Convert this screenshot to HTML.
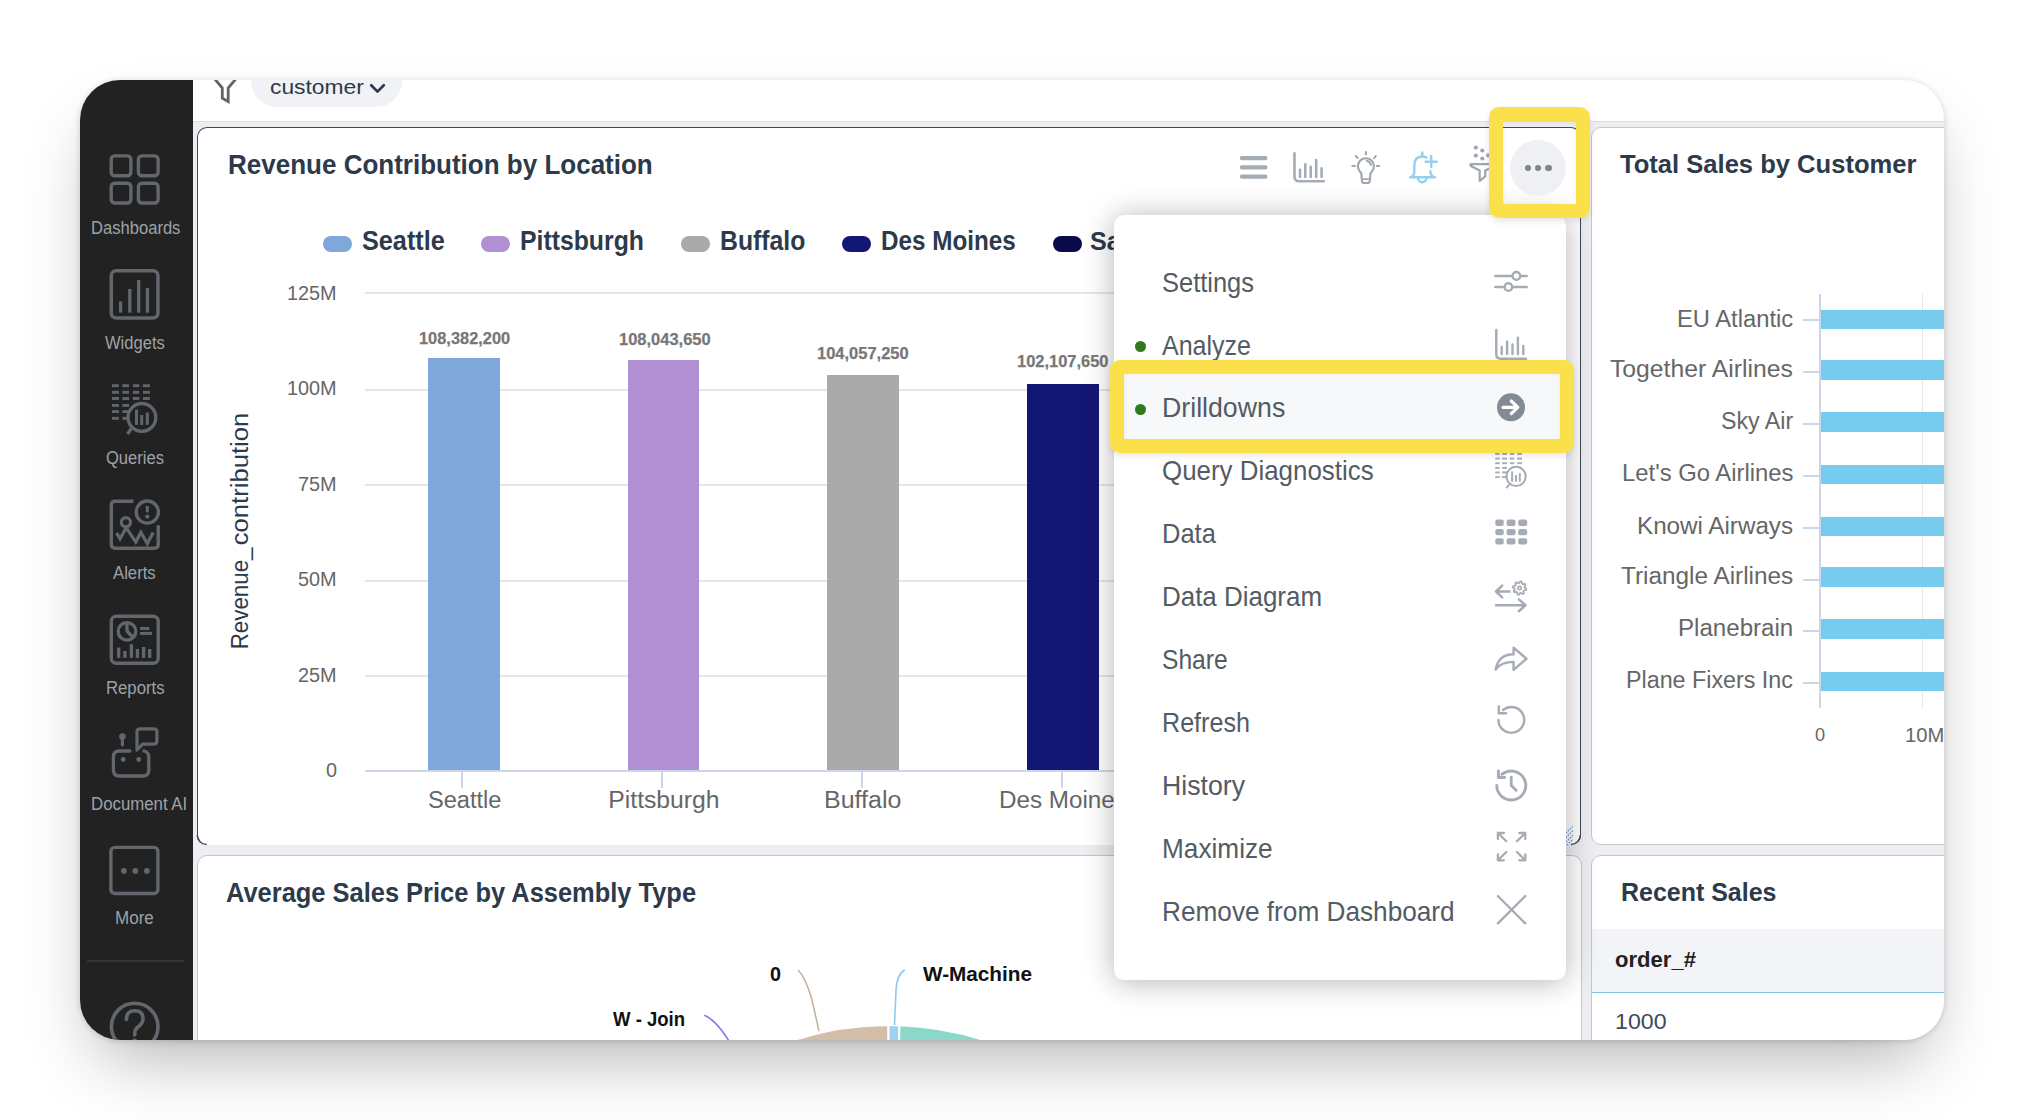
<!DOCTYPE html><html><head><meta charset="utf-8"><style>
*{margin:0;padding:0;box-sizing:border-box}
html,body{width:2024px;height:1120px;background:#fff;overflow:hidden;font-family:"Liberation Sans",sans-serif}
.t{position:absolute;white-space:nowrap;transform-origin:0 0}
.a{position:absolute}
svg{position:absolute;overflow:visible}
</style></head><body>

<div class="a" style="left:80px;top:80px;width:1864px;height:960px;border-radius:40px;box-shadow:0 1px 6px rgba(0,0,0,0.16),0 34px 70px -18px rgba(0,0,0,0.31)"></div>
<div class="a" style="left:80px;top:80px;width:1864px;height:960px;border-radius:40px;overflow:hidden;background:#eceef1">
<div class="a" style="left:-80px;top:-80px;width:2024px;height:1120px">
<div class="a" style="left:80px;top:80px;width:113px;height:960px;background:#222222"></div>
<div class="a" style="left:193px;top:80px;width:1751px;height:42px;background:#fff;border-bottom:1px solid #dcdfe3"></div>
<svg width="2024" height="1120" style="left:0;top:0"><rect x="111.2" y="155.89999999999998" width="19.700000000000003" height="19.8" rx="3.5" fill="none" stroke="#61676d" stroke-width="3.4"/><rect x="138.39999999999998" y="155.89999999999998" width="19.700000000000003" height="19.8" rx="3.5" fill="none" stroke="#61676d" stroke-width="3.4"/><rect x="111.2" y="183.2" width="19.700000000000003" height="19.8" rx="3.5" fill="none" stroke="#61676d" stroke-width="3.4"/><rect x="138.39999999999998" y="183.2" width="19.700000000000003" height="19.8" rx="3.5" fill="none" stroke="#61676d" stroke-width="3.4"/><rect x="111.25" y="270.65" width="46.7" height="47.4" rx="5" fill="none" stroke="#61676d" stroke-width="3.5"/><rect x="118.94999999999999" y="301.5" width="3.3" height="11.199999999999989" fill="#61676d"/><rect x="128.15" y="289" width="3.3" height="23.69999999999999" fill="#61676d"/><rect x="137.04999999999998" y="280" width="3.3" height="32.69999999999999" fill="#61676d"/><rect x="145.75" y="287.9" width="3.3" height="24.80000000000001" fill="#61676d"/><rect x="112.0" y="384.25" width="6.900000000000006" height="2.9" fill="#61676d"/><rect x="122.4" y="384.25" width="6.599999999999994" height="2.9" fill="#61676d"/><rect x="132.9" y="384.25" width="6.400000000000006" height="2.9" fill="#61676d"/><rect x="143.0" y="384.25" width="6.900000000000006" height="2.9" fill="#61676d"/><rect x="112.0" y="390.85" width="6.900000000000006" height="2.9" fill="#61676d"/><rect x="122.4" y="390.85" width="6.599999999999994" height="2.9" fill="#61676d"/><rect x="132.9" y="390.85" width="6.400000000000006" height="2.9" fill="#61676d"/><rect x="143.0" y="390.85" width="6.900000000000006" height="2.9" fill="#61676d"/><rect x="112.0" y="397.05" width="6.900000000000006" height="2.9" fill="#61676d"/><rect x="122.4" y="397.05" width="6.599999999999994" height="2.9" fill="#61676d"/><rect x="132.9" y="397.05" width="6.400000000000006" height="2.9" fill="#61676d"/><rect x="143.0" y="397.05" width="6.900000000000006" height="2.9" fill="#61676d"/><rect x="112.0" y="403.95" width="6.900000000000006" height="2.9" fill="#61676d"/><rect x="122.4" y="403.95" width="6.599999999999994" height="2.9" fill="#61676d"/><rect x="112.0" y="410.15000000000003" width="6.900000000000006" height="2.9" fill="#61676d"/><rect x="122.4" y="410.15000000000003" width="6.599999999999994" height="2.9" fill="#61676d"/><rect x="112.0" y="416.85" width="6.900000000000006" height="2.9" fill="#61676d"/><rect x="122.4" y="416.85" width="6.599999999999994" height="2.9" fill="#61676d"/><circle cx="141.9" cy="417.4" r="13.9" fill="#222" stroke="#61676d" stroke-width="3.3"/><rect x="135.0" y="409.6" width="3" height="15.299999999999955" fill="#61676d"/><rect x="140.2" y="415" width="3" height="9.899999999999977" fill="#61676d"/><rect x="145.8" y="412.5" width="3" height="12.399999999999977" fill="#61676d"/><line x1="131.5" y1="427.8" x2="127.6" y2="434.2" stroke="#61676d" stroke-width="3.3"/><path d="M133.4 501.3 H115.3 Q111.3 501.3 111.3 505.3 V544.2 Q111.3 548.2 115.3 548.2 H154.2 Q158.2 548.2 158.2 544.2 V525.3" fill="none" stroke="#61676d" stroke-width="3.4"/><circle cx="147.3" cy="512.1" r="11.1" fill="none" stroke="#61676d" stroke-width="3.3"/><line x1="147.3" y1="506" x2="147.3" y2="512.3" stroke="#61676d" stroke-width="3"/><circle cx="147.3" cy="516.6" r="2.1" fill="#61676d"/><circle cx="125.9" cy="522.3" r="4.6" fill="none" stroke="#61676d" stroke-width="3.2"/><polyline points="116.5,533 120,538.7 126.2,527.7 135.8,542.1 140.9,532.5 147.3,543.5 153.2,532.5" fill="none" stroke="#61676d" stroke-width="3.3" stroke-linejoin="miter"/><rect x="111.3" y="616.3" width="46.9" height="46.9" rx="5" fill="none" stroke="#61676d" stroke-width="3.4"/><circle cx="127" cy="631.4" r="8.8" fill="none" stroke="#61676d" stroke-width="3.3"/><polyline points="127,622.5 127,631 132.6,637" fill="none" stroke="#61676d" stroke-width="3.3"/><rect x="140.1" y="627" width="9.1" height="3" fill="#61676d"/><rect x="140.1" y="631.9" width="11.8" height="3" fill="#61676d"/><rect x="117.05" y="647.5" width="3.3" height="10.399999999999977" fill="#61676d"/><rect x="123.25" y="651" width="3.3" height="6.899999999999977" fill="#61676d"/><rect x="129.75" y="644.1" width="3.3" height="13.799999999999955" fill="#61676d"/><rect x="135.75" y="649" width="3.3" height="8.899999999999977" fill="#61676d"/><rect x="141.95" y="647" width="3.3" height="10.899999999999977" fill="#61676d"/><rect x="148.04999999999998" y="649" width="3.3" height="8.899999999999977" fill="#61676d"/><circle cx="122.4" cy="736.5" r="3.3" fill="#61676d"/><line x1="122.4" y1="737" x2="122.4" y2="745" stroke="#61676d" stroke-width="3.2" stroke-linecap="round"/><path d="M129.9 751 H119.4 Q113.4 751 113.4 757 V770 Q113.4 776 119.4 776 H142.8 Q148.8 776 148.8 770 V757.5 Q148.8 752 144 751" fill="none" stroke="#61676d" stroke-width="3.3" stroke-linecap="round"/><circle cx="123.2" cy="759.5" r="2.4" fill="#61676d"/><circle cx="138.7" cy="759.5" r="2.4" fill="#61676d"/><path d="M137 750 V731.8 Q137 728.8 140 728.8 H153.9 Q156.9 728.8 156.9 731.8 V741.1 Q156.9 744.1 153.9 744.1 H142.6 Z" fill="none" stroke="#61676d" stroke-width="3.2" stroke-linejoin="round"/><rect x="110.9" y="847.4" width="47" height="46.1" rx="4" fill="none" stroke="#61676d" stroke-width="3.4"/><circle cx="123.9" cy="870.9" r="2.9" fill="#61676d"/><circle cx="135.3" cy="870.9" r="2.9" fill="#61676d"/><circle cx="146.9" cy="870.9" r="2.9" fill="#61676d"/><rect x="87" y="960.2" width="97" height="1.4" fill="#3a3d40"/><circle cx="134.7" cy="1026.6" r="23.3" fill="none" stroke="#61676d" stroke-width="3.6"/><path d="M126.4 1019.5 Q126.4 1010.8 134.7 1010.8 Q143 1010.8 143 1018.6 Q143 1023.5 138.5 1026.5 Q134.7 1029.3 134.7 1033.5 V1035" fill="none" stroke="#61676d" stroke-width="3.6" stroke-linecap="round"/><circle cx="134.7" cy="1041" r="2.4" fill="#61676d"/></svg>
<div class="t" style="left:90.60px;top:217.60px;font-size:17.89px;line-height:19.99px;color:#9ea2a7;transform:scaleX(0.9277);">Dashboards</div>
<div class="t" style="left:104.60px;top:332.60px;font-size:17.89px;line-height:19.99px;color:#9ea2a7;transform:scaleX(0.9253);">Widgets</div>
<div class="t" style="left:105.50px;top:447.80px;font-size:17.89px;line-height:19.99px;color:#9ea2a7;transform:scaleX(0.9256);">Queries</div>
<div class="t" style="left:113.00px;top:562.50px;font-size:17.89px;line-height:19.99px;color:#9ea2a7;transform:scaleX(0.9341);">Alerts</div>
<div class="t" style="left:105.50px;top:677.80px;font-size:17.89px;line-height:19.99px;color:#9ea2a7;transform:scaleX(0.9352);">Reports</div>
<div class="t" style="left:90.80px;top:793.70px;font-size:17.89px;line-height:19.99px;color:#9ea2a7;transform:scaleX(0.9402);">Document AI</div>
<div class="t" style="left:115.10px;top:908.40px;font-size:17.89px;line-height:19.99px;color:#9ea2a7;transform:scaleX(0.9522);">More</div>
<svg width="2024" height="1120" style="left:0;top:0"><polyline points="213.2,77 222.3,88 222.3,98.2 228.2,101.5 228.2,88 237.5,77" fill="none" stroke="#5f656b" stroke-width="2.8" stroke-linejoin="miter"/></svg>
<div class="a" style="left:251px;top:55px;width:151px;height:52px;border-radius:26px;background:#f0f2f5"></div>
<div class="t" style="left:269.80px;top:77.16px;font-size:19.60px;line-height:21.90px;color:#2c3a4b;transform:scaleX(1.1649);">customer</div>
<svg width="2024" height="1120" style="left:0;top:0"><polyline points="371.2,85.2 377.5,91.6 383.8,85.2" fill="none" stroke="#2c3a4b" stroke-width="2.7" stroke-linecap="round" stroke-linejoin="round"/></svg>
<div class="a" style="left:196.5px;top:126.8px;width:1384.5px;height:718.2px;border-radius:10px;background:#fff;border:1.3px solid #3d4858;border-bottom-color:transparent"></div>
<svg width="2024" height="1120" style="left:0;top:0"><path d="M197.15 835 A9.5 9.5 0 0 0 206.65 844.5" fill="none" stroke="#3d4858" stroke-width="1.3"/><path d="M1580.35 835 A9.5 9.5 0 0 1 1570.85 844.5" fill="none" stroke="#3d4858" stroke-width="1.3"/></svg>
<svg width="2024" height="1120" style="left:0;top:0"><path d="M1566 833 L1572.5 826.5 M1566 837.5 L1573 830.5 M1566 842 L1573 835 M1567 845 L1573 839" stroke="#6d9ad6" stroke-width="1.3" stroke-dasharray="1.5 1.2"/></svg>
<div class="a" style="left:1591px;top:127px;width:400px;height:718px;border-radius:10px;background:#fff;border:1px solid #c3c7cd"></div>
<div class="a" style="left:196.5px;top:855px;width:1385px;height:300px;border-radius:10px;background:#fff;border:1px solid #c3c7cd"></div>
<div class="a" style="left:1591px;top:855px;width:400px;height:300px;border-radius:10px;background:#fff;border:1px solid #c3c7cd"></div>
<div class="t" style="left:228.00px;top:149.78px;font-size:27.20px;line-height:30.39px;font-weight:700;color:#2c3a4b;transform:scaleX(0.9565);">Revenue Contribution by Location</div>
<svg width="2024" height="1120" style="left:0;top:0"><rect x="1239.9" y="156.0" width="27.5" height="4.2" rx="1.8" fill="#a6acb5"/><rect x="1239.9" y="165.3" width="27.5" height="4.2" rx="1.8" fill="#a6acb5"/><rect x="1239.9" y="174.5" width="27.5" height="4.2" rx="1.8" fill="#a6acb5"/><path d="M1294.5 153.2 V176.5 Q1294.5 181.3 1299.3 181.3 H1323.8" fill="none" stroke="#a6acb5" stroke-width="2.6" stroke-linecap="round"/><line x1="1300" y1="169.7" x2="1300" y2="177" stroke="#a6acb5" stroke-width="2.6" stroke-linecap="round"/><line x1="1305.3" y1="164.2" x2="1305.3" y2="177" stroke="#a6acb5" stroke-width="2.6" stroke-linecap="round"/><line x1="1310.7" y1="166.9" x2="1310.7" y2="177" stroke="#a6acb5" stroke-width="2.6" stroke-linecap="round"/><line x1="1316.2" y1="160" x2="1316.2" y2="177" stroke="#a6acb5" stroke-width="2.6" stroke-linecap="round"/><line x1="1321.6" y1="168.4" x2="1321.6" y2="177" stroke="#a6acb5" stroke-width="2.6" stroke-linecap="round"/><path d="M1361.3 173.2 L1359.6 171.2 A8 8 0 1 1 1372.2 171.2 L1370.5 173.2 L1369.8 180.8 Q1369.5 183 1367.5 183 H1364.2 Q1362.2 183 1361.9 180.8 Z" fill="none" stroke="#a0a6b0" stroke-width="2.1" stroke-linejoin="round"/><line x1="1363" y1="179.2" x2="1368.8" y2="179.2" stroke="#a0a6b0" stroke-width="1.8"/><path d="M1366.7 160.8 A6 6 0 0 1 1370.9 165" fill="none" stroke="#a0a6b0" stroke-width="2" stroke-linecap="round"/><line x1="1365.9" y1="152" x2="1365.9" y2="154.4" stroke="#a0a6b0" stroke-width="2" stroke-linecap="round"/><line x1="1352.4" y1="166" x2="1355" y2="166" stroke="#a0a6b0" stroke-width="2" stroke-linecap="round"/><line x1="1376.6" y1="166" x2="1379.2" y2="166" stroke="#a0a6b0" stroke-width="2" stroke-linecap="round"/><line x1="1355.8" y1="156" x2="1357.6" y2="158" stroke="#a0a6b0" stroke-width="2" stroke-linecap="round"/><line x1="1375.8" y1="156.1" x2="1374" y2="158.1" stroke="#a0a6b0" stroke-width="2" stroke-linecap="round"/><line x1="1422.3" y1="152.4" x2="1422.3" y2="155.8" stroke="#93cfee" stroke-width="2.4" stroke-linecap="round"/><path d="M1426.3 157.6 Q1424.5 156.5 1422.3 156.5 Q1414.3 156.5 1414.3 165.5 V171.5 Q1414.3 175.5 1411.5 176.8" fill="none" stroke="#93cfee" stroke-width="2.4" stroke-linecap="round"/><path d="M1430.3 171 Q1430.5 175.5 1433.5 176.8" fill="none" stroke="#93cfee" stroke-width="2.4" stroke-linecap="round"/><line x1="1410.2" y1="177.3" x2="1434.8" y2="177.3" stroke="#93cfee" stroke-width="2.4" stroke-linecap="round"/><path d="M1418 178 A4.2 4.2 0 0 0 1426.4 178" fill="none" stroke="#93cfee" stroke-width="2.4"/><line x1="1431.2" y1="156" x2="1431.2" y2="167" stroke="#93cfee" stroke-width="2.4" stroke-linecap="round"/><line x1="1425.6" y1="161.8" x2="1436.8" y2="161.8" stroke="#93cfee" stroke-width="2.4" stroke-linecap="round"/><circle cx="1475.8" cy="147.6" r="2.1" fill="#a0a6b0"/><circle cx="1482.3" cy="150.5" r="2.1" fill="#a0a6b0"/><circle cx="1475.8" cy="155.6" r="2.1" fill="#a0a6b0"/><circle cx="1482.3" cy="158.5" r="2.1" fill="#a0a6b0"/><circle cx="1488.1" cy="155.4" r="2.1" fill="#a0a6b0"/><path d="M1492 164.1 H1471.5 Q1469.5 164.1 1470.8 166 L1479.7 170.6 V181 L1485.2 176.4 V170.6 L1492 167.5" fill="none" stroke="#a0a6b0" stroke-width="2.2" stroke-linejoin="round"/></svg>
<div class="a" style="left:323px;top:235.7px;width:29px;height:16.4px;border-radius:8.2px;background:#7fa7d9"></div>
<div class="t" style="left:361.60px;top:226.97px;font-size:26.76px;line-height:29.90px;font-weight:700;color:#2c3a4b;transform:scaleX(0.9432);">Seattle</div>
<div class="a" style="left:481.2px;top:235.7px;width:28.69999999999999px;height:16.4px;border-radius:8.2px;background:#b08fd3"></div>
<div class="t" style="left:520.00px;top:226.97px;font-size:26.76px;line-height:29.90px;font-weight:700;color:#2c3a4b;transform:scaleX(0.9266);">Pittsburgh</div>
<div class="a" style="left:681.2px;top:235.7px;width:29.0px;height:16.4px;border-radius:8.2px;background:#aaaaaa"></div>
<div class="t" style="left:719.90px;top:226.97px;font-size:26.76px;line-height:29.90px;font-weight:700;color:#2c3a4b;transform:scaleX(0.9262);">Buffalo</div>
<div class="a" style="left:842.1px;top:235.7px;width:28.899999999999977px;height:16.4px;border-radius:8.2px;background:#131774"></div>
<div class="t" style="left:880.90px;top:226.97px;font-size:26.76px;line-height:29.90px;font-weight:700;color:#2c3a4b;transform:scaleX(0.9063);">Des Moines</div>
<div class="a" style="left:1052.7px;top:235.7px;width:29.0px;height:16.4px;border-radius:8.2px;background:#0b0a4a"></div>
<div class="t" style="left:1090.30px;top:227.06px;font-size:26.67px;line-height:29.80px;font-weight:700;color:#2c3a4b;transform:scaleX(0.9400);">San Diego</div>
<div class="a" style="left:364.5px;top:292px;width:1200px;height:2px;background:#e6e6e6"></div>
<div class="a" style="left:364.5px;top:389px;width:1200px;height:2px;background:#e6e6e6"></div>
<div class="a" style="left:364.5px;top:484px;width:1200px;height:2px;background:#e6e6e6"></div>
<div class="a" style="left:364.5px;top:580px;width:1200px;height:2px;background:#e6e6e6"></div>
<div class="a" style="left:364.5px;top:675px;width:1200px;height:2px;background:#e6e6e6"></div>
<div class="a" style="left:364.5px;top:770.4px;width:1200px;height:2px;background:#ccd6eb"></div>
<div class="t" style="left:287.00px;top:281.40px;font-size:20.65px;line-height:23.07px;color:#666666;transform:scaleX(0.9615);">125M</div>
<div class="t" style="left:287.00px;top:376.10px;font-size:20.65px;line-height:23.07px;color:#666666;transform:scaleX(0.9615);">100M</div>
<div class="t" style="left:298.07px;top:471.90px;font-size:20.65px;line-height:23.07px;color:#666666;transform:scaleX(0.9615);">75M</div>
<div class="t" style="left:298.07px;top:567.10px;font-size:20.65px;line-height:23.07px;color:#666666;transform:scaleX(0.9615);">50M</div>
<div class="t" style="left:298.07px;top:662.90px;font-size:20.65px;line-height:23.07px;color:#666666;transform:scaleX(0.9615);">25M</div>
<div class="t" style="left:325.68px;top:757.90px;font-size:20.65px;line-height:23.07px;color:#666666;transform:scaleX(0.9615);">0</div>
<div class="a" style="left:427.6px;top:358.2px;width:72.1px;height:412.2px;background:#7fa7d9"></div>
<div class="a" style="left:627.5px;top:360.1px;width:71.7px;height:410.3px;background:#b08fd3"></div>
<div class="a" style="left:827.1px;top:374.5px;width:71.9px;height:395.9px;background:#aaaaaa"></div>
<div class="a" style="left:1027.0px;top:383.5px;width:72.0px;height:386.9px;background:#131774"></div>
<div class="t" style="left:419.30px;top:328.79px;font-size:17.02px;line-height:19.01px;font-weight:700;color:#777777;transform:scaleX(0.9634);-webkit-text-stroke:0.25px #777777;">108,382,200</div>
<div class="t" style="left:619.30px;top:330.29px;font-size:17.02px;line-height:19.01px;font-weight:700;color:#777777;transform:scaleX(0.9687);-webkit-text-stroke:0.25px #777777;">108,043,650</div>
<div class="t" style="left:817.10px;top:344.39px;font-size:17.02px;line-height:19.01px;font-weight:700;color:#777777;transform:scaleX(0.9687);-webkit-text-stroke:0.25px #777777;">104,057,250</div>
<div class="t" style="left:1016.70px;top:351.59px;font-size:17.02px;line-height:19.01px;font-weight:700;color:#777777;transform:scaleX(0.9666);-webkit-text-stroke:0.25px #777777;">102,107,650</div>
<div class="a" style="left:461px;top:772px;width:2px;height:16px;background:#ccd6eb"></div>
<div class="a" style="left:661px;top:772px;width:2px;height:16px;background:#ccd6eb"></div>
<div class="a" style="left:861px;top:772px;width:2px;height:16px;background:#ccd6eb"></div>
<div class="a" style="left:1061px;top:772px;width:2px;height:16px;background:#ccd6eb"></div>
<div class="t" style="left:427.60px;top:785.92px;font-size:24.73px;line-height:27.62px;color:#666666;transform:scaleX(0.9537);">Seattle</div>
<div class="t" style="left:608.30px;top:785.92px;font-size:24.73px;line-height:27.62px;color:#666666;">Pittsburgh</div>
<div class="t" style="left:824.10px;top:785.92px;font-size:24.73px;line-height:27.62px;color:#666666;transform:scaleX(1.0114);">Buffalo</div>
<div class="t" style="left:999.20px;top:785.92px;font-size:24.73px;line-height:27.62px;color:#666666;transform:scaleX(0.9800);">Des Moines</div>
<div class="t" style="left:248.00px;top:626.75px;font-size:24.58px;line-height:27.46px;color:#2c3a4b;transform-origin:0 22.25px;transform:rotate(-90deg) scaleX(0.9080)">Revenue_</div>
<div class="t" style="left:248.00px;top:523.15px;font-size:24.58px;line-height:27.46px;color:#2c3a4b;transform-origin:0 22.25px;transform:rotate(-90deg) scaleX(1.0434)">contribution</div>
<div class="t" style="left:1620.40px;top:149.70px;font-size:26.62px;line-height:29.74px;font-weight:700;color:#2c3a4b;transform:scaleX(0.9607);">Total Sales by Customer</div>
<div class="a" style="left:1819px;top:293.5px;width:2px;height:414px;background:#ccd6eb"></div>
<div class="a" style="left:1921.5px;top:293.5px;width:1.5px;height:414px;background:#e6e6e6"></div>
<div class="a" style="left:1821px;top:309.8px;width:200px;height:19.6px;background:#76cbef"></div>
<div class="a" style="left:1802.7px;top:318.6px;width:16.5px;height:2px;background:#ccd6eb"></div>
<div class="t" style="left:1676.90px;top:304.65px;font-size:24.58px;line-height:27.46px;color:#666666;transform:scaleX(0.9662);">EU Atlantic</div>
<div class="a" style="left:1821px;top:360.2px;width:200px;height:19.6px;background:#76cbef"></div>
<div class="a" style="left:1802.7px;top:370.6px;width:16.5px;height:2px;background:#ccd6eb"></div>
<div class="t" style="left:1610.30px;top:355.05px;font-size:24.58px;line-height:27.46px;color:#666666;transform:scaleX(1.0059);">Together Airlines</div>
<div class="a" style="left:1821px;top:412.4px;width:200px;height:19.6px;background:#76cbef"></div>
<div class="a" style="left:1802.7px;top:422.5px;width:16.5px;height:2px;background:#ccd6eb"></div>
<div class="t" style="left:1720.90px;top:407.25px;font-size:24.58px;line-height:27.46px;color:#666666;transform:scaleX(0.9437);">Sky Air</div>
<div class="a" style="left:1821px;top:464.6px;width:200px;height:19.6px;background:#76cbef"></div>
<div class="a" style="left:1802.7px;top:474.5px;width:16.5px;height:2px;background:#ccd6eb"></div>
<div class="t" style="left:1621.60px;top:459.45px;font-size:24.58px;line-height:27.46px;color:#666666;transform:scaleX(0.9697);">Let's Go Airlines</div>
<div class="a" style="left:1821px;top:516.9px;width:200px;height:19.6px;background:#76cbef"></div>
<div class="a" style="left:1802.7px;top:526.5px;width:16.5px;height:2px;background:#ccd6eb"></div>
<div class="t" style="left:1637.00px;top:511.75px;font-size:24.58px;line-height:27.46px;color:#666666;transform:scaleX(0.9849);">Knowi Airways</div>
<div class="a" style="left:1821px;top:567.1px;width:200px;height:19.6px;background:#76cbef"></div>
<div class="a" style="left:1802.7px;top:578.5px;width:16.5px;height:2px;background:#ccd6eb"></div>
<div class="t" style="left:1620.90px;top:561.95px;font-size:24.58px;line-height:27.46px;color:#666666;transform:scaleX(0.9898);">Triangle Airlines</div>
<div class="a" style="left:1821px;top:619.2px;width:200px;height:19.6px;background:#76cbef"></div>
<div class="a" style="left:1802.7px;top:630.4px;width:16.5px;height:2px;background:#ccd6eb"></div>
<div class="t" style="left:1677.80px;top:614.05px;font-size:24.58px;line-height:27.46px;color:#666666;transform:scaleX(0.9808);">Planebrain</div>
<div class="a" style="left:1821px;top:671.6px;width:200px;height:19.6px;background:#76cbef"></div>
<div class="a" style="left:1802.7px;top:682.4px;width:16.5px;height:2px;background:#ccd6eb"></div>
<div class="t" style="left:1626.20px;top:666.45px;font-size:24.58px;line-height:27.46px;color:#666666;transform:scaleX(0.9469);">Plane Fixers Inc</div>
<div class="t" style="left:1814.94px;top:724.02px;font-size:19.20px;line-height:21.45px;color:#666666;transform:scaleX(0.9500);">0</div>
<div class="t" style="left:1905.20px;top:724.09px;font-size:19.78px;line-height:22.10px;color:#666666;transform:scaleX(1.0200);">10M</div>
<div class="t" style="left:226.10px;top:877.64px;font-size:26.91px;line-height:30.06px;font-weight:700;color:#2c3a4b;transform:scaleX(0.9457);">Average Sales Price by Assembly Type</div>
<div class="t" style="left:769.50px;top:962.66px;font-size:19.93px;line-height:22.26px;font-weight:700;color:#111;transform:scaleX(0.9946);">0</div>
<div class="t" style="left:923.00px;top:962.66px;font-size:19.93px;line-height:22.26px;font-weight:700;color:#111;transform:scaleX(1.0404);">W-Machine</div>
<div class="t" style="left:613.40px;top:1007.66px;font-size:19.93px;line-height:22.26px;font-weight:700;color:#111;transform:scaleX(0.9307);">W - Join</div>
<svg width="2024" height="1120" style="left:0;top:0"><path d="M889 1327 L627.46 1176.00 A302 302 0 0 1 888.47 1025.00 Z" fill="#d2bea9" stroke="#fff" stroke-width="2"/><path d="M889 1327 L888.47 1025.00 A302 302 0 0 1 899.54 1025.18 Z" fill="#9dd3ef" stroke="#fff" stroke-width="2"/><path d="M889 1327 L899.54 1025.18 A302 302 0 0 1 1150.54 1176.00 Z" fill="#8cd8c8" stroke="#fff" stroke-width="2"/><path d="M798 970 Q806 978 812 1000 L819 1031" fill="none" stroke="#c9b29b" stroke-width="1.6"/><path d="M904.8 970 Q897 974 896 990 L894.5 1025" fill="none" stroke="#8ecbef" stroke-width="1.6"/><path d="M704.3 1015.2 Q716 1020 729 1041" fill="none" stroke="#7b7bef" stroke-width="1.6"/></svg>
<div class="t" style="left:1620.70px;top:877.70px;font-size:26.62px;line-height:29.74px;font-weight:700;color:#2c3a4b;transform:scaleX(0.9385);">Recent Sales</div>
<div class="a" style="left:1592px;top:929px;width:400px;height:64px;background:#f3f4f7;border-bottom:1.5px solid #7ec5e0"></div>
<div class="t" style="left:1614.80px;top:948.18px;font-size:22.00px;line-height:24.58px;font-weight:700;color:#222222;transform:scaleX(1.0039);">order_#</div>
<div class="t" style="left:1614.80px;top:1008.59px;font-size:22.55px;line-height:25.19px;color:#3c4a5c;transform:scaleX(1.0286);">1000</div>
<div class="a" style="left:1114px;top:215px;width:452px;height:765px;border-radius:10px;background:#fff;box-shadow:0 2px 30px rgba(0,0,0,0.3)"></div>
<div class="a" style="left:1114px;top:377px;width:452px;height:63px;background:#f7f8fa"></div>
<div class="t" style="left:1161.50px;top:267.58px;font-size:27.20px;line-height:30.39px;color:#535b63;transform:scaleX(0.9363);">Settings</div>
<div class="t" style="left:1161.50px;top:330.50px;font-size:27.20px;line-height:30.39px;color:#535b63;transform:scaleX(0.9198);">Analyze</div>
<div class="t" style="left:1161.50px;top:393.42px;font-size:27.20px;line-height:30.39px;color:#535b63;transform:scaleX(0.9828);">Drilldowns</div>
<div class="t" style="left:1161.50px;top:456.34px;font-size:27.20px;line-height:30.39px;color:#535b63;transform:scaleX(0.9526);">Query Diagnostics</div>
<div class="t" style="left:1161.50px;top:519.26px;font-size:27.20px;line-height:30.39px;color:#535b63;transform:scaleX(0.9380);">Data</div>
<div class="t" style="left:1161.50px;top:582.18px;font-size:27.20px;line-height:30.39px;color:#535b63;transform:scaleX(0.9540);">Data Diagram</div>
<div class="t" style="left:1161.50px;top:645.10px;font-size:27.20px;line-height:30.39px;color:#535b63;transform:scaleX(0.9055);">Share</div>
<div class="t" style="left:1161.50px;top:708.02px;font-size:27.20px;line-height:30.39px;color:#535b63;transform:scaleX(0.9237);">Refresh</div>
<div class="t" style="left:1161.50px;top:770.94px;font-size:27.20px;line-height:30.39px;color:#535b63;transform:scaleX(0.9816);">History</div>
<div class="t" style="left:1161.50px;top:833.86px;font-size:27.20px;line-height:30.39px;color:#535b63;transform:scaleX(0.9638);">Maximize</div>
<div class="t" style="left:1161.50px;top:896.78px;font-size:27.20px;line-height:30.39px;color:#535b63;transform:scaleX(0.9635);">Remove from Dashboard</div>
<div class="a" style="left:1134.7px;top:340.8px;width:11.2px;height:11.2px;border-radius:50%;background:#2f7a1f"></div>
<div class="a" style="left:1134.7px;top:403.6px;width:11.2px;height:11.2px;border-radius:50%;background:#2f7a1f"></div>
<svg width="2024" height="1120" style="left:0;top:0"><line x1="1495.3" y1="275.9" x2="1526.7" y2="275.9" stroke="#a6acb5" stroke-width="2.5" stroke-linecap="round"/><line x1="1495.3" y1="287" x2="1526.7" y2="287" stroke="#a6acb5" stroke-width="2.5" stroke-linecap="round"/><circle cx="1516.4" cy="275.9" r="3.8" fill="#fff" stroke="#a6acb5" stroke-width="2.5"/><circle cx="1508.4" cy="287" r="3.8" fill="#fff" stroke="#a6acb5" stroke-width="2.5"/><path d="M1496.3 330 V354.3 Q1496.3 358.7 1500.7 358.7 H1526" fill="none" stroke="#a6acb5" stroke-width="2.5" stroke-linecap="round"/><line x1="1501.7" y1="346.9" x2="1501.7" y2="354" stroke="#a6acb5" stroke-width="2.4" stroke-linecap="round"/><line x1="1507.1" y1="341.5" x2="1507.1" y2="354" stroke="#a6acb5" stroke-width="2.4" stroke-linecap="round"/><line x1="1512.5" y1="344.5" x2="1512.5" y2="354" stroke="#a6acb5" stroke-width="2.4" stroke-linecap="round"/><line x1="1517.9" y1="337.6" x2="1517.9" y2="354" stroke="#a6acb5" stroke-width="2.4" stroke-linecap="round"/><line x1="1523.3" y1="346" x2="1523.3" y2="354" stroke="#a6acb5" stroke-width="2.4" stroke-linecap="round"/><circle cx="1511" cy="407.3" r="14" fill="#848a94"/><path d="M1503 407.3 H1517 M1511.3 401 L1517.8 407.3 L1511.3 413.6" fill="none" stroke="#fff" stroke-width="3.2" stroke-linecap="round" stroke-linejoin="round"/><rect x="1495.2" y="453.05" width="4.5" height="1.9" fill="#a6acb5"/><rect x="1502.1" y="453.05" width="4.900000000000091" height="1.9" fill="#a6acb5"/><rect x="1509.9" y="453.05" width="4.2999999999999545" height="1.9" fill="#a6acb5"/><rect x="1517.2" y="453.05" width="4.7999999999999545" height="1.9" fill="#a6acb5"/><rect x="1495.2" y="457.65000000000003" width="4.5" height="1.9" fill="#a6acb5"/><rect x="1502.1" y="457.65000000000003" width="4.900000000000091" height="1.9" fill="#a6acb5"/><rect x="1509.9" y="457.65000000000003" width="4.2999999999999545" height="1.9" fill="#a6acb5"/><rect x="1517.2" y="457.65000000000003" width="4.7999999999999545" height="1.9" fill="#a6acb5"/><rect x="1495.2" y="462.25" width="4.5" height="1.9" fill="#a6acb5"/><rect x="1502.1" y="462.25" width="4.900000000000091" height="1.9" fill="#a6acb5"/><rect x="1509.9" y="462.25" width="4.2999999999999545" height="1.9" fill="#a6acb5"/><rect x="1517.2" y="462.25" width="4.7999999999999545" height="1.9" fill="#a6acb5"/><rect x="1495.2" y="466.95" width="4.5" height="1.9" fill="#a6acb5"/><rect x="1502.1" y="466.95" width="4.900000000000091" height="1.9" fill="#a6acb5"/><rect x="1495.2" y="471.45" width="4.5" height="1.9" fill="#a6acb5"/><rect x="1502.1" y="471.45" width="4.900000000000091" height="1.9" fill="#a6acb5"/><rect x="1495.2" y="476.05" width="4.5" height="1.9" fill="#a6acb5"/><rect x="1502.1" y="476.05" width="4.900000000000091" height="1.9" fill="#a6acb5"/><circle cx="1516.1" cy="476.4" r="9.6" fill="#fff" stroke="#a6acb5" stroke-width="2"/><rect x="1511.1" y="471.4" width="2" height="10.300000000000011" fill="#a6acb5"/><rect x="1515" y="475.1" width="2" height="6.599999999999966" fill="#a6acb5"/><rect x="1518.8" y="473.2" width="2" height="8.5" fill="#a6acb5"/><line x1="1509.3" y1="484.6" x2="1506.2" y2="488.2" stroke="#a6acb5" stroke-width="2"/><rect x="1495.3" y="519.6" width="8.400000000000091" height="6.2999999999999545" rx="2" fill="#a6acb5"/><rect x="1495.3" y="529" width="8.400000000000091" height="6.2999999999999545" rx="2" fill="#a6acb5"/><rect x="1495.3" y="538.2" width="8.400000000000091" height="6.399999999999977" rx="2" fill="#a6acb5"/><rect x="1506.6" y="519.6" width="8.900000000000091" height="6.2999999999999545" rx="2" fill="#a6acb5"/><rect x="1506.6" y="529" width="8.900000000000091" height="6.2999999999999545" rx="2" fill="#a6acb5"/><rect x="1506.6" y="538.2" width="8.900000000000091" height="6.399999999999977" rx="2" fill="#a6acb5"/><rect x="1518.2" y="519.6" width="9.0" height="6.2999999999999545" rx="2" fill="#a6acb5"/><rect x="1518.2" y="529" width="9.0" height="6.2999999999999545" rx="2" fill="#a6acb5"/><rect x="1518.2" y="538.2" width="9.0" height="6.399999999999977" rx="2" fill="#a6acb5"/><path d="M1509.6 591.5 H1496 M1502.2 585.6 L1496 591.5 L1502.2 597.4" fill="none" stroke="#a6acb5" stroke-width="2.5" stroke-linecap="round" stroke-linejoin="round"/><path d="M1496 605.3 H1525.5 M1518.9 599.4 L1525.5 605.3 L1518.9 611.2" fill="none" stroke="#a6acb5" stroke-width="2.5" stroke-linecap="round" stroke-linejoin="round"/><polygon points="1526.27,588.75 1526.01,590.04 1524.01,590.46 1523.47,591.27 1523.85,593.28 1522.76,594.01 1521.05,592.88 1520.09,593.08 1518.95,594.77 1517.66,594.51 1517.24,592.51 1516.43,591.97 1514.42,592.35 1513.69,591.26 1514.82,589.55 1514.62,588.59 1512.93,587.45 1513.19,586.16 1515.19,585.74 1515.73,584.93 1515.35,582.92 1516.44,582.19 1518.15,583.32 1519.11,583.12 1520.25,581.43 1521.54,581.69 1521.96,583.69 1522.77,584.23 1524.78,583.85 1525.51,584.94 1524.38,586.65 1524.58,587.61" fill="none" stroke="#a6acb5" stroke-width="1.8" stroke-linejoin="round"/><circle cx="1519.6" cy="588.1" r="1.7" fill="none" stroke="#a6acb5" stroke-width="1.6"/><path d="M1495.7 669.5 C1497.5 659.5 1504 654.3 1513.6 654.3 V647.6 L1526.5 658.75 L1513.6 669.9 V661.9 C1505.5 661.9 1499.5 664 1495.7 669.5 Z" fill="none" stroke="#a6acb5" stroke-width="2.4" stroke-linejoin="round"/><path d="M1498.40 719.90 A12.9 12.9 0 1 0 1503.01 710.02" fill="none" stroke="#a6acb5" stroke-width="2.4" stroke-linecap="round"/><path d="M1498.8 706.5 V713.2 H1506" fill="none" stroke="#a6acb5" stroke-width="2.4" stroke-linecap="round" stroke-linejoin="round"/><path d="M1496.75 785.50 A14.5 14.5 0 1 0 1501.93 774.39" fill="none" stroke="#a6acb5" stroke-width="2.9" stroke-linecap="round"/><path d="M1498.4 771 V777.5 H1504.6" fill="none" stroke="#a6acb5" stroke-width="2.9" stroke-linecap="round" stroke-linejoin="round"/><path d="M1511.25 777.3 V785.4 L1516.1 790.3" fill="none" stroke="#a6acb5" stroke-width="2.9" stroke-linecap="round" stroke-linejoin="round"/><path d="M1506.3000000000002 841.3 L1497.9 833 M1497.9 839 V833 H1503.9" fill="none" stroke="#a6acb5" stroke-width="2.3" stroke-linecap="round" stroke-linejoin="round"/><path d="M1516.8999999999999 841.3 L1525.3 833 M1525.3 839 V833 H1519.3" fill="none" stroke="#a6acb5" stroke-width="2.3" stroke-linecap="round" stroke-linejoin="round"/><path d="M1506.3000000000002 852.0 L1497.9 860.3 M1497.9 854.3 V860.3 H1503.9" fill="none" stroke="#a6acb5" stroke-width="2.3" stroke-linecap="round" stroke-linejoin="round"/><path d="M1516.8999999999999 852.0 L1525.3 860.3 M1525.3 854.3 V860.3 H1519.3" fill="none" stroke="#a6acb5" stroke-width="2.3" stroke-linecap="round" stroke-linejoin="round"/><path d="M1497.9 896 L1525.3 923.4 M1525.3 896 L1497.9 923.4" fill="none" stroke="#a6acb5" stroke-width="2.3" stroke-linecap="round"/></svg>
<div class="a" style="left:1510px;top:140px;width:56px;height:56px;border-radius:50%;background:#eef0f3"></div>
<div class="a" style="left:1524.8px;top:164.8px;width:6.4px;height:6.4px;border-radius:50%;background:#7f858f"></div>
<div class="a" style="left:1534.8px;top:164.8px;width:6.4px;height:6.4px;border-radius:50%;background:#7f858f"></div>
<div class="a" style="left:1545.2px;top:164.8px;width:6.4px;height:6.4px;border-radius:50%;background:#7f858f"></div>
<div class="a" style="left:1489px;top:106.5px;width:101px;height:111.5px;border:14px solid #fae14b;border-radius:10px;box-shadow:0 3px 7px rgba(0,0,0,0.1),inset 0 2px 5px rgba(0,0,0,0.06)"></div>
<div class="a" style="left:1110px;top:360px;width:464px;height:92.6px;border:14px solid #fae14b;border-radius:10px;box-shadow:0 3px 7px rgba(0,0,0,0.1),inset 0 2px 5px rgba(0,0,0,0.06)"></div>
</div></div>
</body></html>
